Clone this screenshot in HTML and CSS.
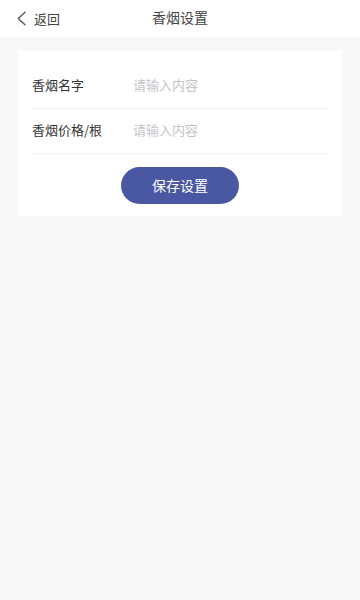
FILE: index.html
```html
<!DOCTYPE html>
<html lang="zh">
<head>
<meta charset="utf-8">
<meta name="viewport" content="width=device-width, initial-scale=1">
<title>香烟设置</title>
<link rel="stylesheet" href="styles.css">
</head>
<body>
<header class="topbar">
  <a class="back">
    <svg class="back-icon" width="11" height="15" viewBox="0 0 11 15"><path d="M9 1.2 L2.2 7.5 L9 13.8" fill="none" stroke="#555" stroke-width="1.4" stroke-linecap="round" stroke-linejoin="round"/></svg>
    <span class="back-text">返回</span>
  </a>
  <h1 class="title">香烟设置</h1>
</header>
<main class="content">
  <section class="card">
    <div class="row">
      <label class="label">香烟名字</label>
      <input class="input" type="text" placeholder="请输入内容">
    </div>
    <div class="row">
      <label class="label">香烟价格/根</label>
      <input class="input" type="text" placeholder="请输入内容">
    </div>
    <div class="actions">
      <button class="btn" type="button">保存设置</button>
    </div>
  </section>
</main>
</body>
</html>
```

FILE: styles.css
```css
* { box-sizing: border-box; }
html, body { margin: 0; padding: 0; }
body {
  background: #f8f8f8;
  font-family: "Noto Sans CJK SC", "Noto Sans", sans-serif;
  color: #333;
  min-height: 600px;
}
.topbar {
  position: relative;
  height: 37px;
  background: #fff;
  display: flex;
  align-items: center;
  justify-content: center;
  padding-bottom: 3px;
}
.back {
  position: absolute;
  left: 16px;
  top: 0;
  height: 37px;
  display: flex;
  align-items: center;
  gap: 7px;
  color: #444;
}
.back-icon { display: block; }
.back-text { font-size: 13px; line-height: 1; margin-bottom: 1px; }
.title {
  margin: 0;
  font-size: 14px;
  font-weight: normal;
  color: #444;
  line-height: 1;
}
.content { padding: 14px 18px 0; }
.card {
  background: #fff;
  padding: 13px 13px 12px 14px;
}
.row {
  height: 45px;
  display: flex;
  align-items: center;
  padding-bottom: 3px;
  border-bottom: 1px solid #f0f0f0;
}
.label {
  width: 101px;
  font-size: 13px;
  color: #333;
  line-height: 1;
}
.input {
  flex: 1;
  border: none;
  outline: none;
  background: transparent;
  font-family: inherit;
  font-size: 13px;
  line-height: 1;
  color: #333;
  padding: 0;
  min-width: 0;
}
.input::placeholder { color: #c4c4c8; }
.actions {
  display: flex;
  justify-content: center;
  padding-top: 13px;
}
.btn {
  width: 118px;
  height: 37px;
  border: none;
  border-radius: 19px;
  background: #4a57a3;
  color: #fff;
  font-family: inherit;
  font-size: 14px;
  line-height: 1;
  padding: 0 0 2px;
  margin-left: -1px;
}
```
